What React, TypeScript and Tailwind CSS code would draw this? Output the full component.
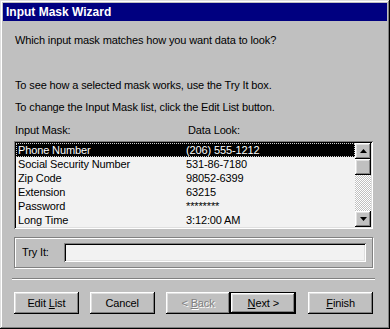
const raised =
  "shadow-[inset_-1px_-1px_#000,inset_1px_1px_#fff,inset_-2px_-2px_#808080,inset_2px_2px_#dfdfdf]";
const sunken =
  "shadow-[inset_1px_1px_#808080,inset_-1px_-1px_#fff,inset_2px_2px_#000,inset_-2px_-2px_#dfdfdf]";

const masks = [
  { name: "Phone Number", look: "(206) 555-1212" },
  { name: "Social Security Number", look: "531-86-7180" },
  { name: "Zip Code", look: "98052-6399" },
  { name: "Extension", look: "63215" },
  { name: "Password", look: "********" },
  { name: "Long Time", look: "3:12:00 AM" },
];

function Arrow({ up }: { up?: boolean }) {
  return (
    <div className={`w-[16px] h-[16px] bg-[#c0c0c0] flex items-center justify-center ${raised}`}>
      <svg width="7" height="4" viewBox="0 0 7 4">
        {up ? <path d="M3.5 0 L7 4 L0 4 Z" fill="#000" /> : <path d="M0 0 L7 0 L3.5 4 Z" fill="#000" />}
      </svg>
    </div>
  );
}

function Button({
  children,
  className = "",
  isDefault = false,
}: {
  children: React.ReactNode;
  className?: string;
  isDefault?: boolean;
}) {
  return (
    <div
      className={`h-[22px] flex items-center justify-center bg-[#c0c0c0] ${
        isDefault
          ? "shadow-[inset_0_0_0_1px_#000,inset_-2px_-2px_#000,inset_2px_2px_#fff,inset_-3px_-3px_#808080,inset_3px_3px_#dfdfdf]"
          : raised
      } ${className}`}
    >
      {children}
    </div>
  );
}

export default function App() {
  return (
    <div
      className="w-[390px] h-[329px] bg-[#c0c0c0] p-[3px] flex flex-col text-[11px] tracking-[-0.13px] text-black shadow-[inset_-1px_-1px_#000,inset_1px_1px_#dfdfdf,inset_-2px_-2px_#808080,inset_2px_2px_#fff]"
      style={{ fontFamily: '"Liberation Sans", Arial, sans-serif' }}
    >
      {/* Title bar */}
      <div className="h-[18px] bg-[#000080] text-white font-bold text-[12px] tracking-normal leading-[18px] pl-[3px]">
        Input Mask Wizard
      </div>

      <div className="flex flex-col pl-[11px] pr-[14px]">
        <p className="leading-[13px] mt-[13px] pl-[1px]">Which input mask matches how you want data to look?</p>
        <p className="leading-[13px] mt-[32px] pl-[1px]">To see how a selected mask works, use the Try It box.</p>
        <p className="leading-[13px] mt-[9px] pl-[1px]">To change the Input Mask list, click the Edit List button.</p>

        <div className="flex leading-[13px] mt-[10px] pl-[1px]">
          <span className="w-[173px]">Input Mask:</span>
          <span>Data Look:</span>
        </div>

        {/* List box */}
        <div className={`mt-[4px] h-[88px] bg-[#f2f2f2] p-[2px] flex ${sunken}`}>
          <div className="flex-1 flex flex-col">
            {masks.map((m, i) => (
              <div
                key={m.name}
                className={`h-[14px] flex items-center leading-[13px] ${
                  i === 0 ? "bg-black text-white border border-dotted border-[#d0d0d0]" : "border border-transparent"
                }`}
              >
                <span className="w-[169px] pl-[1px]">{m.name}</span>
                <span>{m.look}</span>
              </div>
            ))}
          </div>
          {/* Scrollbar */}
          <div className="w-[16px] flex flex-col">
            <Arrow up />
            <div className={`w-[16px] h-[16px] bg-[#c0c0c0] ${raised}`} />
            <div className="flex-1 bg-[repeating-conic-gradient(#c0c0c0_0_25%,#fff_0_50%)] bg-[length:2px_2px]" />
            <Arrow />
          </div>
        </div>

        {/* Try It group */}
        <div className="mt-[8px] h-[31px] flex items-center border border-[#808080] shadow-[inset_1px_1px_#fff,1px_1px_#fff] pl-[7px] pr-[6px]">
          <span className="w-[42px]">Try It:</span>
          <div className={`flex-1 h-[19px] bg-[#f2f2f2] ${sunken}`} />
        </div>

        {/* Separator */}
        <div className="mt-[10px] -ml-[2px] -mr-[2px] h-[2px] border-t border-[#808080] border-b border-b-white" />

        {/* Buttons */}
        <div className="flex mt-[12px]">
          <Button className="w-[65px]">
            <span>
              Edit <u>L</u>ist
            </span>
          </Button>
          <Button className="w-[65px] ml-[11px]">Cancel</Button>
          <Button className="w-[65px] ml-[11px]">
            <span className="text-[#808080] [text-shadow:1px_1px_#fff]">
              &lt; <u>B</u>ack
            </span>
          </Button>
          <Button className="w-[66px]" isDefault>
            <span>
              <u>N</u>ext &gt;
            </span>
          </Button>
          <Button className="w-[65px] ml-[12px]">
            <span>
              <u>F</u>inish
            </span>
          </Button>
        </div>
      </div>
    </div>
  );
}
